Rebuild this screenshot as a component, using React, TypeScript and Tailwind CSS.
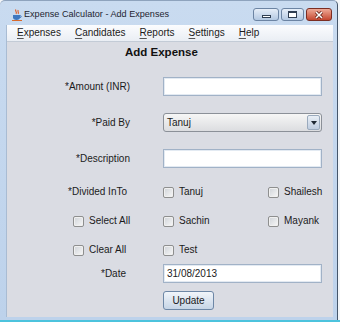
import React from "react";

function Check({ label }: { label: string }) {
  return (
    <span className="flex items-center whitespace-nowrap">
      <span className="block shrink-0 w-[11px] h-[11px] rounded-[2px] border border-[#8e8f8f] bg-gradient-to-br from-[#cfd3d8] to-[#f8f8f8] shadow-[inset_0_0_0_1px_#f0f0f0]" />
      <span className="ml-[5px]">{label}</span>
    </span>
  );
}

function Menu({ text }: { text: string }) {
  return (
    <span className="px-[7px]">
      <span className="underline underline-offset-[2px] decoration-[#555]">{text[0]}</span>
      {text.slice(1)}
    </span>
  );
}

export default function App() {
  return (
    <div className="w-[340px] h-[322px] bg-[#f3f6f9] overflow-hidden font-['Liberation_Sans',Arial,sans-serif] text-[10px] text-[#1b1b1b] leading-none">
      <div className="w-[338px] h-[320px] flex flex-col bg-gradient-to-b from-[#c9dbf0] to-[#bdd2eb] border-r border-[#45566b] rounded-t-[5px] border-t border-t-[#8ea3bd]">
        {/* Title bar */}
        <div className="h-[24px] flex items-start shrink-0">
          <svg className="ml-[12px] mt-[8px]" width="10" height="12" viewBox="0 0 10 12">
            <path d="M4 0.5 C2.5 2 5.5 3 4 4.8 M6.3 1.2 C5 2.6 7.4 3.2 6 4.8" stroke="#e2581c" strokeWidth="1.1" fill="none" />
            <path d="M1 6 h7 v2.5 c0 1.6 -1.4 2.5 -3.5 2.5 s-3.5 -0.9 -3.5 -2.5z" fill="#3f78bf" />
            <path d="M8 6.6 c1.6 0 1.6 2 0 2" stroke="#3f78bf" strokeWidth="1" fill="none" />
            <rect x="0" y="11" width="10" height="1" fill="#d96a2b" />
          </svg>
          <span className="ml-[2px] mt-[9px] text-[9.1px] text-[#1e2530]">Expense Calculator - Add Expenses</span>
          <div className="ml-auto mr-[5px] mt-[7px] flex gap-[2px]">
            <div className="w-[26px] h-[13px] rounded-[3px] border border-[#6c84a3] bg-gradient-to-b from-[#e6eef8] to-[#b3c8e2] flex items-center justify-center">
              <div className="w-[9px] h-[3px] mt-[4px] border border-[#2f3e52] bg-white" />
            </div>
            <div className="w-[23px] h-[13px] rounded-[3px] border border-[#6c84a3] bg-gradient-to-b from-[#e6eef8] to-[#b3c8e2] flex items-center justify-center">
              <div className="w-[9px] h-[7px] border border-[#2f3e52] border-t-2 bg-white" />
            </div>
            <div className="w-[26px] h-[13px] rounded-[3px] border border-[#7b2d22] bg-gradient-to-b from-[#eda896] to-[#c4462f] flex items-center justify-center">
              <svg width="10" height="8" viewBox="0 0 10 8">
                <path d="M2 1 L8 7 M8 1 L2 7" stroke="#5a1a12" strokeWidth="3" />
                <path d="M2 1 L8 7 M8 1 L2 7" stroke="#ffffff" strokeWidth="1.6" />
              </svg>
            </div>
          </div>
        </div>
        {/* Body */}
        <div className="ml-[6px] mr-[4px] flex-1 flex flex-col border-l border-[#a9bcd3]">
          {/* Menu bar */}
          <div className="h-[17px] shrink-0 flex items-center pl-[3px] bg-gradient-to-b from-[#fbfcfe] to-[#eaeef4] border-b border-[#c3cbd6] text-[10px] text-[#1b1b1b]">
            <Menu text="Expenses" />
            <Menu text="Candidates" />
            <Menu text="Reports" />
            <Menu text="Settings" />
            <Menu text="Help" />
          </div>
          {/* Content */}
          <div className="flex-1 bg-[#dadce3] flex flex-col">
            <div className="h-[21px] flex items-center pl-[118px] font-bold text-[11.5px] text-[#111]">Add Expense</div>

            <div className="mt-[14px] h-[19px] flex items-center">
              <div className="w-[123px] flex justify-end">*Amount (INR)</div>
              <div className="w-[33px]" />
              <div className="w-[159px] h-[19px] bg-white border border-[#a1b2c7] shadow-[inset_0_0_0_1px_#e3eaf2]" />
            </div>

            <div className="mt-[17px] h-[19px] flex items-center">
              <div className="w-[123px] flex justify-end">*Paid By</div>
              <div className="w-[33px]" />
              <div className="w-[159px] h-[19px] rounded-[3px] border border-[#8b9098] bg-gradient-to-b from-[#f6f6f6] to-[#dcdde0] flex items-center">
                <span className="ml-[3px]">Tanuj</span>
                <div className="ml-auto mr-[1px] w-[13px] h-[15px] rounded-[2px] border border-[#9aaabd] bg-gradient-to-b from-[#e9eff6] to-[#bfcde0] flex items-center justify-center">
                  <svg width="6" height="4" viewBox="0 0 6 4"><path d="M0 0 H6 L3 4z" fill="#1f2833" /></svg>
                </div>
              </div>
            </div>

            <div className="mt-[17px] h-[19px] flex items-center">
              <div className="w-[123px] flex justify-end">*Description</div>
              <div className="w-[33px]" />
              <div className="w-[159px] h-[19px] bg-white border border-[#a1b2c7] shadow-[inset_0_0_0_1px_#e3eaf2]" />
            </div>

            <div className="mt-[15px] h-[18px] flex items-center">
              <div className="w-[123px] flex justify-end pr-[3px]">*Divided InTo</div>
              <div className="w-[33px]" />
              <div className="w-[105px]"><Check label="Tanuj" /></div>
              <Check label="Shailesh" />
            </div>

            <div className="mt-[11px] h-[18px] flex items-center">
              <div className="w-[123px] shrink-0 pl-[66px]"><Check label="Select All" /></div>
              <div className="w-[33px] shrink-0" />
              <div className="w-[105px]"><Check label="Sachin" /></div>
              <Check label="Mayank" />
            </div>

            <div className="mt-[11px] h-[18px] flex items-center">
              <div className="w-[123px] shrink-0 pl-[66px]"><Check label="Clear All" /></div>
              <div className="w-[33px] shrink-0" />
              <div className="w-[105px]"><Check label="Test" /></div>
            </div>

            <div className="mt-[5px] h-[19px] flex items-center">
              <div className="w-[123px] flex justify-end pr-[4px]">*Date</div>
              <div className="w-[33px]" />
              <div className="w-[159px] h-[19px] bg-white border border-[#a1b2c7] shadow-[inset_0_0_0_1px_#e3eaf2] flex items-center">
                <span className="ml-[3px]">31/08/2013</span>
              </div>
            </div>

            <div className="mt-[8px] h-[19px] flex items-center">
              <div className="w-[156px]" />
              <div className="w-[51px] h-[19px] rounded-[3px] border border-[#6d87a6] bg-gradient-to-b from-[#f1f5fa] to-[#c6d5e6] flex items-center justify-center text-[#1a1a1a]">Update</div>
            </div>
          </div>
        </div>
        <div className="h-[3px] shrink-0" />
      </div>
      <div className="h-[2px] bg-[#4cc3dd]" />
    </div>
  );
}
